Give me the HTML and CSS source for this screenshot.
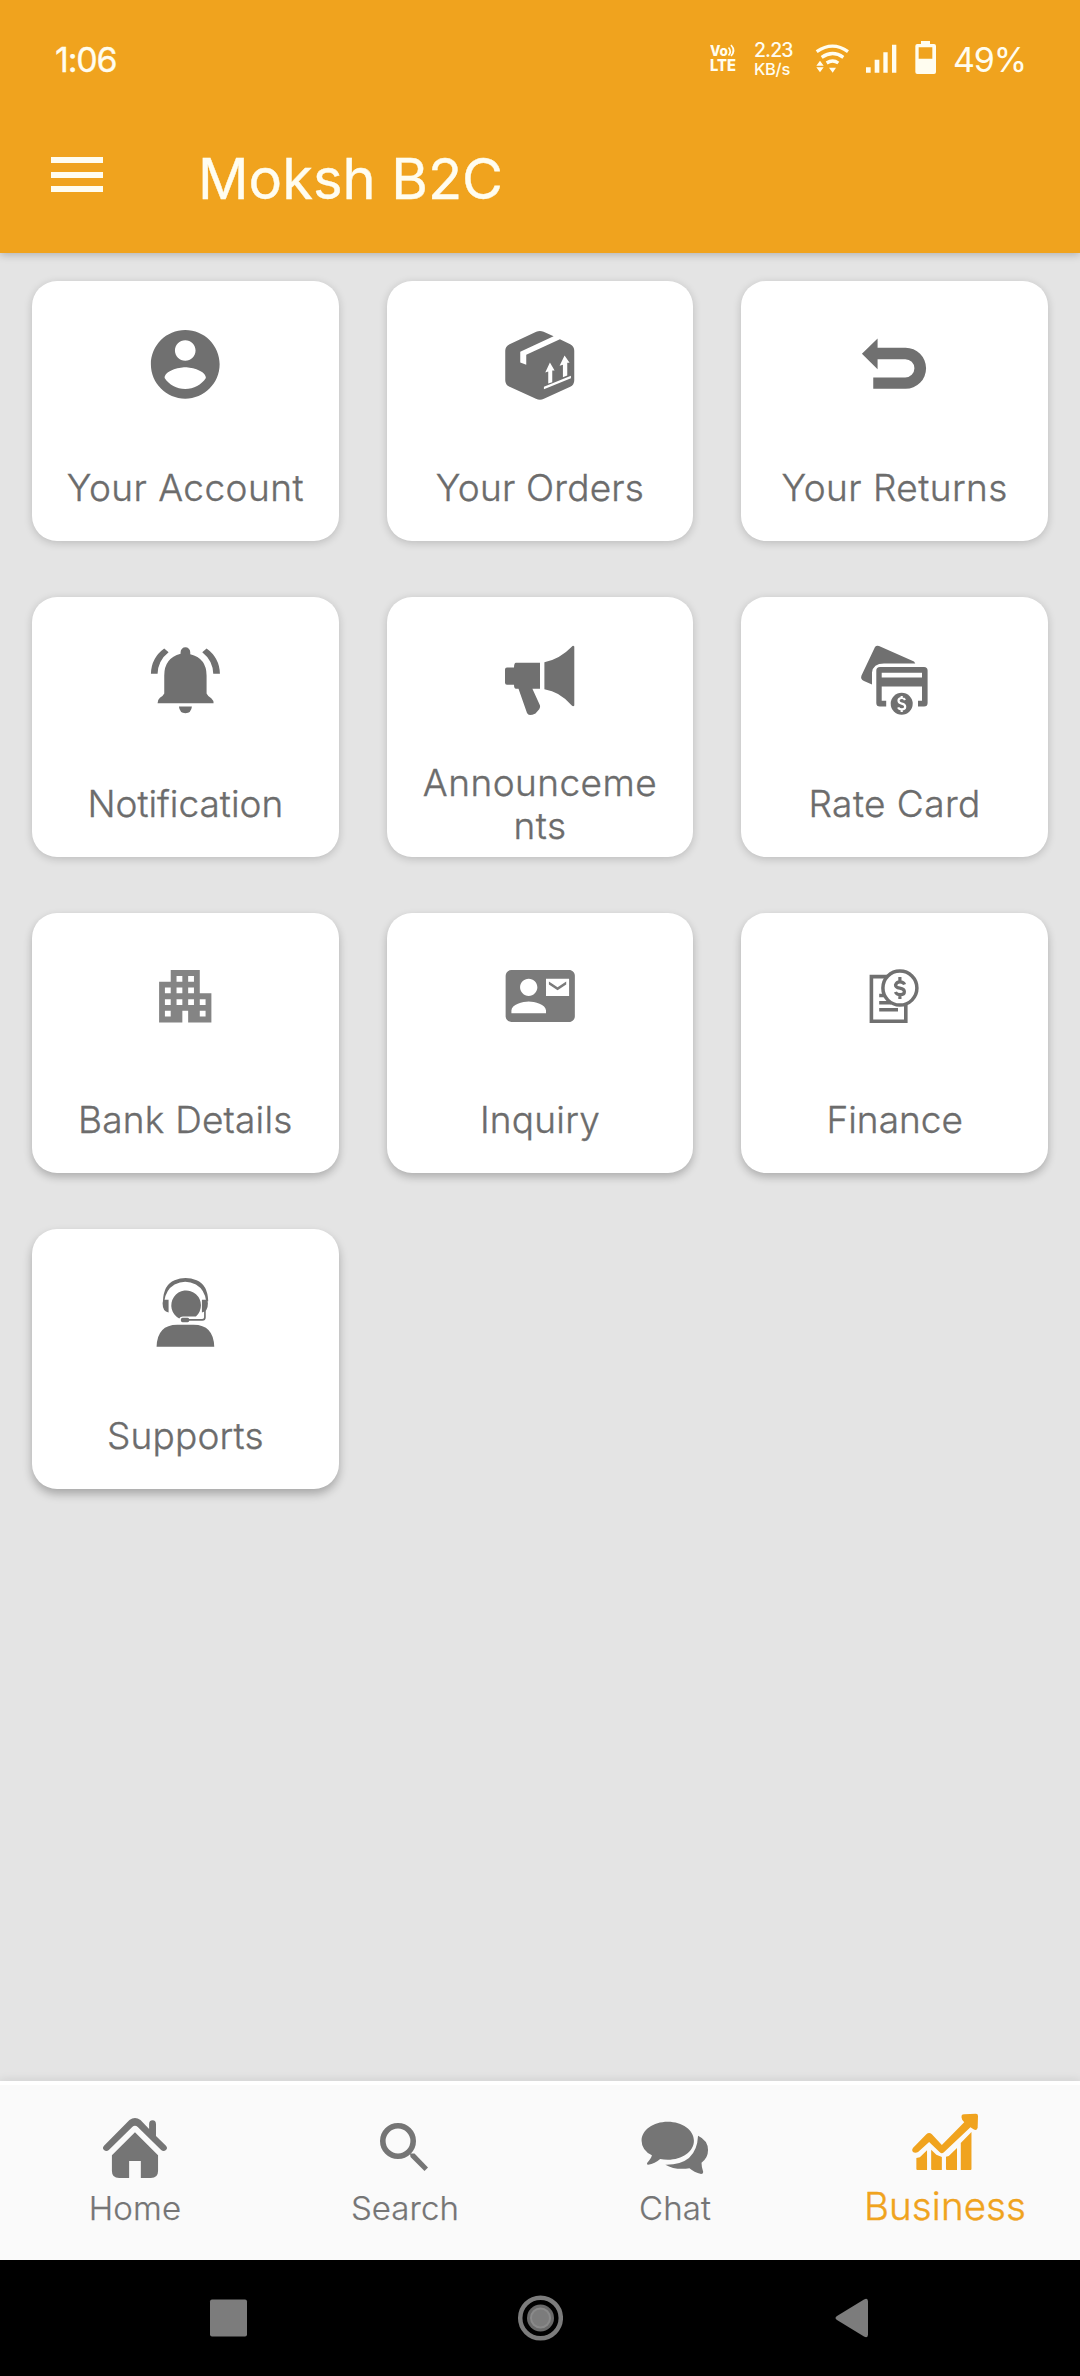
FILE: index.html
```html
<!DOCTYPE html>
<html lang="en">
<head>
<meta charset="utf-8">
<title>Moksh B2C</title>
<link rel="stylesheet" href="styles.css">
</head>
<body>
<div class="screen">
  <header class="header">
    <div class="status">
      <span class="time">1:06</span>
      <div class="status-icons">
        <svg class="volte" width="28" height="32" viewBox="0 0 28 32"><text x="0" y="13" font-size="14" textLength="18" lengthAdjust="spacingAndGlyphs">Vo</text><path d="M18.500 4.500q3.500 4 0 8M21 2q5 5.500 0 11" fill="none" stroke="#fffdf0" stroke-width="1.700"/><text x="0" y="28" font-size="16" textLength="26" lengthAdjust="spacingAndGlyphs">LTE</text></svg>
        <div class="speed"><span class="speed-value">2.23</span><span class="speed-unit">KB/s</span></div>
        <svg class="wifi" width="36" height="34" viewBox="402 62 108 102"><g fill="none" stroke="#fffdf0" stroke-width="10"><path d="M410 91Q458 58 504 91M425 108Q458 85 490 108M440 125Q458 113 475 125"/></g><path d="M447 139h21l-10 15zM409 133l11-15 11 15zM409 138h22l-11 15z"/></svg>
        <svg class="signal" width="33" height="34" viewBox="556 62 99 102"><path d="M559 138h14v16h-14zM585 115h14v39h-14zM611 93h13v61h-13zM637 70h13v84h-13z"/></svg>
        <svg class="battery" width="23" height="36" viewBox="702 60 69 108"><path fill-rule="evenodd" d="M723 63h27v9h12q6 0 6 6v78q0 6-6 6h-50q-6 0-6-6V78q0-6 6-6h11zM716 82v34h41V82z"/></svg>
        <span class="percent">49%</span>
      </div>
    </div>
    <div class="toolbar">
      <div class="menu"><i></i><i></i><i></i></div>
      <h1 class="title">Moksh B2C</h1>
    </div>
  </header>

  <main class="content">
    <div class="grid">
      <div class="card"><svg class="icon" viewBox="0 0 24 24"><path d="M12 2C6.480 2 2 6.480 2 12s4.480 10 10 10 10-4.480 10-10S17.520 2 12 2zm0 3c1.660 0 3 1.340 3 3s-1.340 3-3 3-3-1.340-3-3 1.340-3 3-3zm0 14.200c-2.500 0-4.710-1.280-6-3.220.030-1.990 4-3.080 6-3.080 1.990 0 5.970 1.090 6 3.080-1.290 1.940-3.500 3.220-6 3.220z"/></svg><span class="label wide">Your Account</span></div>

      <div class="card"><svg class="icon" viewBox="386.250 159.600 247.500 247.500"><path d="M498 186q11-5 22 0l30 13-100 47v32l18 7v-30l101-47 31 15q12 6 12 20v88q0 14-12 20l-79 36q-12 6-24 0l-79-36q-13-6-13-20v-88q0-14 13-20z"/><g fill="#fff"><path d="M539 278l14 24h-7v35l-12 4v-36l-9 3zM583 257l15 22h-7v38l-13 5v-37l-10 3zM521 351l81-33v7l-81 33z"/></g></svg><span class="label">Your Orders</span></div>

      <div class="card"><svg class="icon" viewBox="370.250 159.600 247.500 247.500"><path d="M397 252l47-46v28h84a61.500 61.500 0 0 1 0 123h-97v-34h96a27.500 27.500 0 0 0 0-55h-83v30z"/></svg><span class="label wide">Your Returns</span></div>

      <div class="card"><svg class="icon" viewBox="372.250 147.600 247.500 247.500"><path d="M482 187a14.500 14.500 0 0 1 29 0v6q49 12 49 64v54q4 9 14 14 7 6 7 15H413q0-10 7-16 9-5 13-13v-54q0-52 49-65zM477 350h39q-2 20-19.500 20T477 350zM433 176l13 11q-32 25-33 65h-20q1-48 40-76zM560 176l-13 11q32 25 33 65h20q-1-48-40-76z"/></svg><span class="label tight">Notification</span></div>

      <div class="card"><svg class="icon" viewBox="0 0 82.500 82.500"><path d="M73 7.500q1-1.500 2.300 0v59q-1 1.500-2.500 0Q61 52.500 45.400 50.200V23.300Q61 20 73 7.500zM17 23.800h24v26h-7.600l7.500 16.500q.6 2-.7 4l-3.700 4.200Q33 76 31 76t-3-2L19.500 49.800H17q-2 0-2-4H8q-2 0-2-2V30.500q0-2 2-2h7q0-4.700 2-4.700z"/></svg><span class="label wide">Announcements</span></div>

      <div class="card"><svg class="icon" viewBox="0 0 82.500 82.500"><path fill-rule="evenodd" d="M22 8q1.500-2 4-1l35 15.500 1.300 2H31q-11 0-12 9v12l-8-3.500q-4-2-2.500-5.500zM27 28h44q3.600 0 3.600 3.500V64q0 3.500-3.600 3.500h-6v-5.700h4V47.500H28.700v14.300h4.500v5.700H27q-3.700 0-3.700-3.500V31.500Q23.300 28 27 28zM28.700 33.800v4.700H69v-4.700z"/><circle cx="48.700" cy="64.800" r="11"/><path d="M52 61q-.8-2-3.200-2-3.300 0-3.300 2.600 0 2.400 3.200 3 3.500.6 3.500 3.100 0 2.700-3.500 2.700-2.700 0-3.500-2M48.700 57v2.500M48.700 70v3" fill="none" stroke="#fff" stroke-width="2.200"/></svg><span class="label wide">Rate Card</span></div>

      <div class="card"><svg class="icon bank" viewBox="-2.200 -2.200 28.400 28.400"><path d="M17 11V3H7v4H3v14h8v-4h2v4h8V11h-4zM7 19H5v-2h2v2zm0-4H5v-2h2v2zm0-4H5V9h2v2zm4 4H9v-2h2v2zm0-4H9V9h2v2zm0-4H9V5h2v2zm4 8h-2v-2h2v2zm0-4h-2V9h2v2zm0-4h-2V5h2v2zm4 12h-2v-2h2v2zm0-4h-2v-2h2v2z"/></svg><span class="label">Bank Details</span></div>

      <div class="card"><svg class="icon inquiry" viewBox="-2.300 -2.200 28.600 28.600"><path d="M21 8V7l-3 2-3-2v1l3 2 3-2zm1-5H2C.9 3 0 3.900 0 5v14c0 1.100.9 2 2 2h20c1.100 0 1.990-.9 1.990-2L24 5c0-1.100-.9-2-2-2zM8 6c1.660 0 3 1.340 3 3s-1.340 3-3 3-3-1.340-3-3 1.340-3 3-3zm6 12H2v-1c0-2 4-3.100 6-3.100s6 1.100 6 3.100v1zm8-6h-8V6h8v6z"/></svg><span class="label">Inquiry</span></div>

      <div class="card"><svg class="icon" viewBox="0 0 82.500 82.500"><g fill="none" stroke="#707070" stroke-width="3.600"><path d="M18.400 21.600h34.400v44.600H18.400zM26.200 54.800H45M26.200 47.800H38M26.200 40.500H33"/><circle cx="46.900" cy="33.100" r="17" fill="#fff" stroke-width="3.500"/><path d="M51.600 29.500Q50.500 26.800 47 26.800T42.500 30q0 2.500 4.300 3.200 4.600.8 4.600 3.500 0 3-4.300 3-3.600 0-4.700-2.700M46.900 22v4M46.900 40v4" stroke-width="3.200"/></g></svg><span class="label tight">Finance</span></div>

      <div class="card"><svg class="icon" viewBox="372.250 153.600 247.500 247.500"><path d="M410 381q2-66 62-66h49q60 0 62 66zM478 296A44.500 44.500 0 1 1 528 290h-39q-8 0-11 6zM446 240v38q-18-3-18-28 0-6 4-10zM546 240v38q18-3 18-28 0-6-4-10z"/><path d="M429 244q2-50 35-63 33-13 66 0 33 13 35 63l-6 1q-4-35-31-51-32-17-64 0-27 16-31 51z"/><path d="M555 270v22q0 8-8 8h-40" fill="none" stroke="#707070" stroke-width="5"/><rect x="483" y="294" width="25" height="13" rx="5"/></svg><span class="label">Supports</span></div>
    </div>
  </main>

  <nav class="tabs">
    <div class="tab"><svg class="tab-icon" viewBox="287.500 144 209.100 216" preserveAspectRatio="none"><path d="M376 180q16-12 32 0l25 27v-14q0-12 10-12t10 12v35l29 29q6 7 0 13-7 6-14 0l-68-69q-8-8-16 0l-68 69q-7 6-14 0-6-6 0-13zM392 217l67 69v47q0 21-21 21h-29v-51h-34v51h-29q-21 0-21-21v-47z"/></svg><span class="tab-label">Home</span></div>
    <div class="tab"><svg class="tab-icon" viewBox="0 0 72 72"><circle cx="29" cy="33" r="15.200" fill="none" stroke="#757575" stroke-width="5.600"/><path d="M41 45.500h4.500L59 59.500 55.500 63 41.500 49z"/></svg><span class="tab-label">Search</span></div>
    <div class="tab"><svg class="tab-icon" viewBox="287.500 144 209.100 216" preserveAspectRatio="none"><path d="M371 185c42 0 76 25 76 57s-34 57-76 57q-12 0-22-2-15 14-35 17-5 0-3-5 12-13 14-23-30-16-30-44c0-32 34-57 76-57zM459 227q29 14 29 43 0 24-19 38 0 12 5 28 0 6-6 6-21-5-34-17-42 6-70-11 91 1 95-87z"/></svg><span class="tab-label">Chat</span></div>
    <div class="tab active"><svg class="tab-icon" viewBox="1071.600 144 209.100 216" preserveAspectRatio="none"><path d="M1083 264l39-41q8-8 16 0l29 32 65-68-6-8q-6-16 6-16l34-2q6 0 6 7l-1 35q-3 11-12 5l-9-6-77 75q-6 6-12 0l-31-31-32 30q-8 5-15 0-5-6 0-12zM1093 294l10-2 21-21v59h-28q-3 0-3-3zM1136 269l15 15 16 7v39h-28q-3 0-3-3zM1179 290l8-2 24-24v66h-29q-3 0-3-3zM1222 249l31-33v111q0 3-3 3h-28z"/></svg><span class="tab-label">Business</span></div>
  </nav>

  <div class="system-nav">
    <svg width="40" height="46" viewBox="0 0 40 46"><rect x="2" y="4.500" width="37" height="37" rx="2" fill="#7c7c7c"/></svg>
    <svg width="46" height="46" viewBox="0 0 46 46"><circle cx="23.500" cy="23" r="20.300" fill="none" stroke="#7c7c7c" stroke-width="4.500"/><circle cx="23.500" cy="23" r="13.500" fill="#6a6a6a"/><circle cx="23.500" cy="23" r="9.500" fill="#7c7c7c" stroke="#8a8a8a" stroke-width="2"/></svg>
    <svg width="40" height="46" viewBox="0 0 40 46"><path d="M5 21L32 4.500q4-2 4 2v33q0 4-4 2L5 25q-3-2 0-4z" fill="#7c7c7c"/></svg>
  </div>
</div>
</body>
</html>
```
FILE: styles.css
```css
* { box-sizing: border-box; }
body { margin: 0; background: #e4e4e4; font-family: Inter, "Open Sans", sans-serif; }
svg { display: block; flex: none; }
.screen { width: 1080px; height: 2376px; display: flex; flex-direction: column; overflow: hidden; }

.header { height: 253px; background: #f0a31e; color: #fffdf0; box-shadow: 0 2px 8px rgba(0,0,0,.22); }
.header svg { fill: #fffdf0; }
.status { height: 118px; display: flex; justify-content: space-between; align-items: center; padding: 0 56px 0 55px; }
.time { font-size: 34px; letter-spacing: -1.200px; -webkit-text-stroke: .3px; }
.status-icons { display: flex; align-items: center; }
.volte { font-weight: 800; margin: -1px 16px 0 0; }
.speed { width: 40px; display: flex; flex-direction: column; margin-right: 20px; }
.speed-value { font-size: 19.500px; line-height: 20px; font-weight: 500; letter-spacing: -.9px; }
.speed-unit { font-size: 16.500px; line-height: 19px; font-weight: 500; letter-spacing: -.3px; }
.wifi { margin-right: 15px; }
.signal { margin-right: 16px; }
.battery { margin: -2px 16px 0 0; }
.percent { font-size: 34px; width: 71px; letter-spacing: -1.200px; }

.toolbar { height: 121px; display: flex; align-items: center; padding-left: 51px; }
.menu { width: 52px; display: flex; flex-direction: column; gap: 8.600px; margin: 0 95px 8px 0; }
.menu i { height: 6px; background: #fffdf0; }
.title { margin: 0; font-size: 56px; font-weight: 400; line-height: 68px; -webkit-text-stroke: .4px; }

.content { flex: 1; padding: 28px 32px; }
.grid { display: grid; grid-template-columns: repeat(3, 1fr); gap: 56px 48px; }
.card { height: 260px; border-radius: 25px; background: #fff; display: flex; flex-direction: column; align-items: center; padding: 42px 28px 0; box-shadow: 0 2px 8px rgba(0,0,0,.18); }
.card:nth-child(n+7) { box-shadow: 0 4px 8px rgba(0,0,0,.24); }
.card:nth-child(n+10) { box-shadow: 0 5px 10px rgba(0,0,0,.27); }
.icon { width: 82.500px; height: 82.500px; fill: #707070; }
.icon.bank { fill: #848484; }
.icon.inquiry { fill: #7b7b7b; }
.label { width: 100%; height: 106px; margin-top: 29px; display: grid; align-content: center; text-align: center; overflow-wrap: anywhere; font-size: 37px; line-height: 43px; font-weight: 300; letter-spacing: .2px; color: #6c6c6c; -webkit-text-stroke: .35px; }
.label.wide { letter-spacing: .45px; }
.label.tight { letter-spacing: 0; }

.tabs { height: 179px; display: grid; grid-template-columns: repeat(4, 1fr); padding-top: 23px; border-top: 4px solid #fff; background: #fafafa; box-shadow: 0 -2px 8px rgba(0,0,0,.08); }
.tab { display: flex; flex-direction: column; align-items: center; color: #757575; }
.tab-icon { width: 72px; height: 72px; fill: #757575; }
.tab-label { font-size: 33px; line-height: 56px; font-weight: 300; letter-spacing: .1px; -webkit-text-stroke: .25px; }
.active { color: #f0a31e; }
.active .tab-icon { fill: #f0a31e; }
.active .tab-label { font-size: 38.500px; line-height: 53px; -webkit-text-stroke: .4px; }

.system-nav { height: 116px; background: #000; display: flex; align-items: center; justify-content: space-between; padding: 0 208px; }
```
